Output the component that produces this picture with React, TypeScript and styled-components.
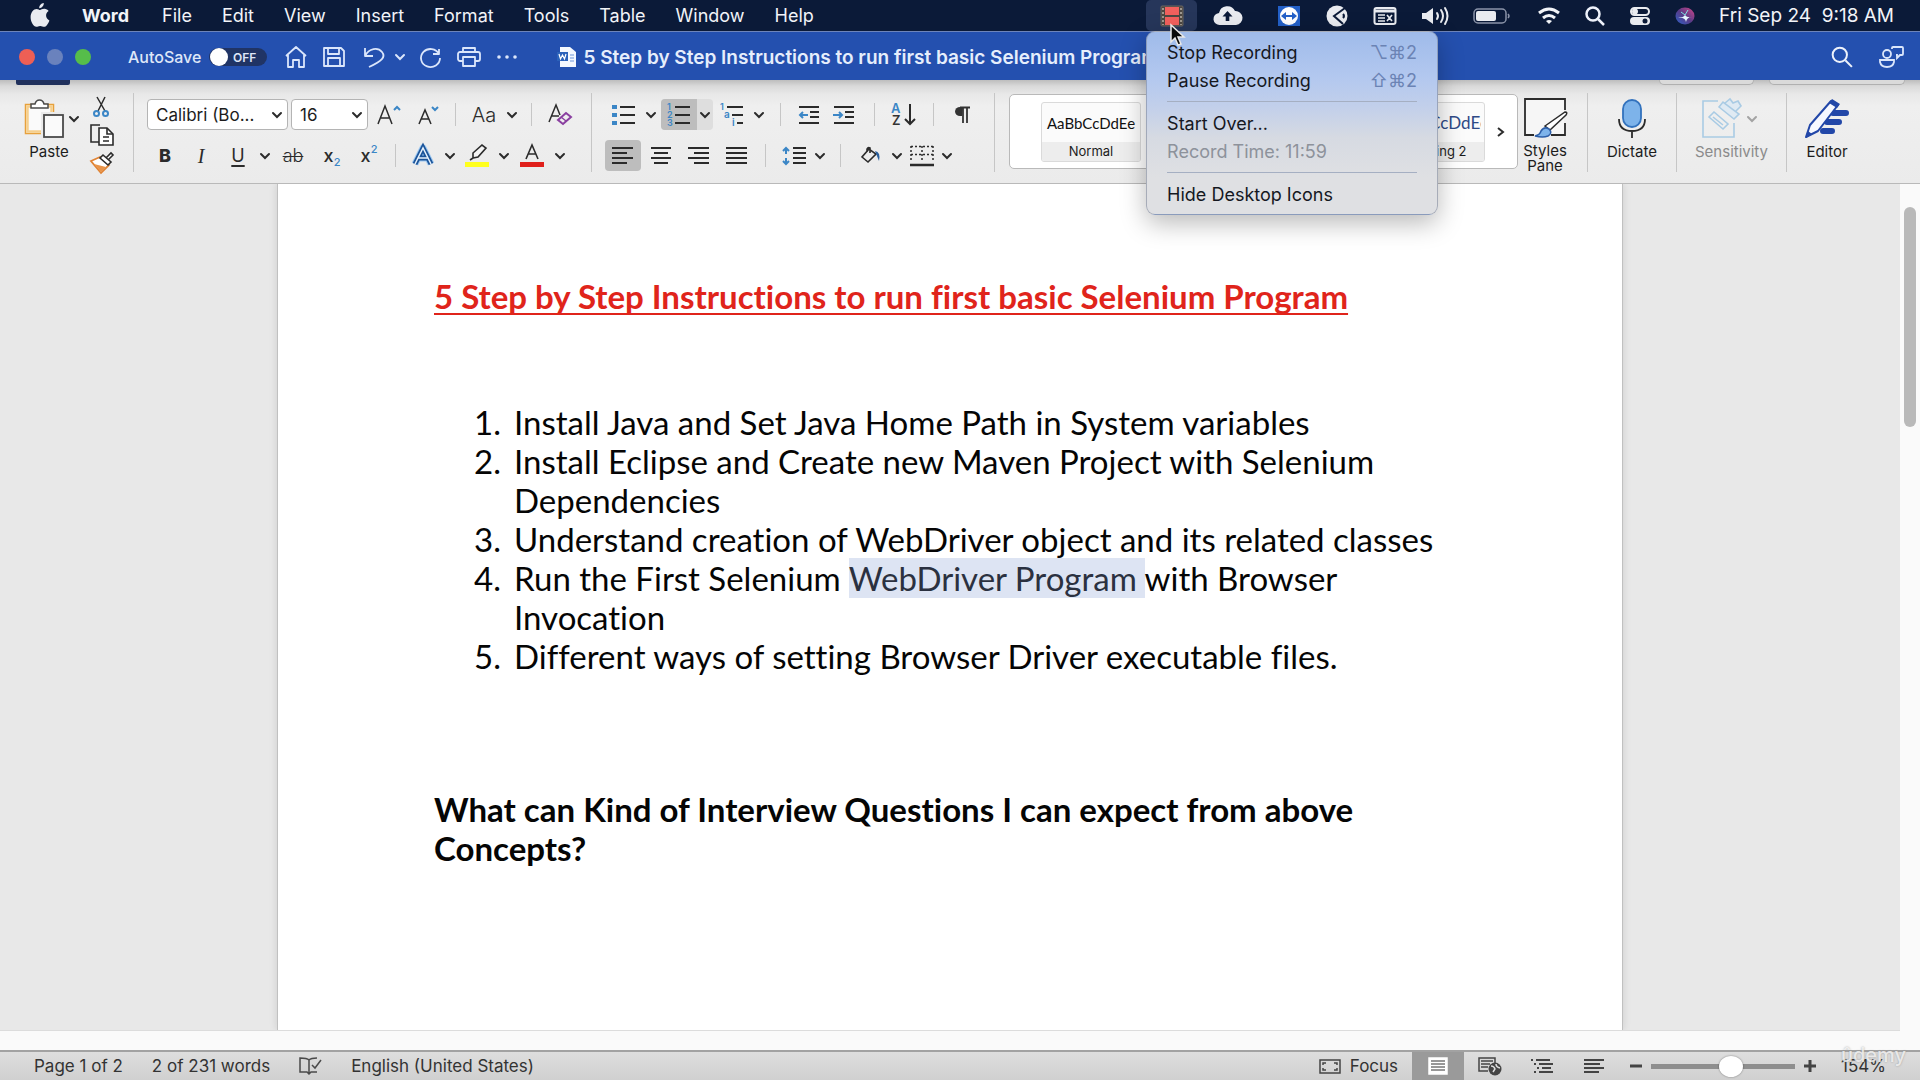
import React from "react";
import styled, { createGlobalStyle, css } from "styled-components";

const Global = createGlobalStyle`
  * { box-sizing: border-box; }
  html, body { margin: 0; padding: 0; }
  body { font-family: Inter, "Liberation Sans", sans-serif; color: #1c1c1c; }
  button, input, select { font: inherit; color: inherit; }
  button { border: 0; padding: 0; background: none; }
  svg { display: block; flex: none; overflow: visible; }
`;

const ui = { docFont: 'Lato, "Open Sans", sans-serif', line: "#c6c6c6", ink: "#2b2b2b", blue: "#3b86c6" };

const Shell = styled.div`
  display: flex;
  flex-direction: column;
  height: 100vh;
  overflow: hidden;
  background: #fafafa;
`;

/* ---------- macOS menu bar ---------- */
const MenuBar = styled.header`
  display: flex;
  align-items: center;
  justify-content: space-between;
  flex: none;
  height: 32px;
  padding: 0 26px 0 30px;
  background: #0b1a38;
  border-bottom: 1px solid #6d84ba;
  color: #f2f4f8;
  font-size: 18px;
  white-space: nowrap;
`;
const MenuNav = styled.nav`
  display: flex;
  align-items: center;
  gap: 30px;
`;
const MenuName = styled.button<{ $bold?: boolean }>`
  line-height: 30px;
  margin-right: ${(p) => (p.$bold ? 3 : 0)}px;
  font-weight: ${(p) => (p.$bold ? 700 : 400)};
`;
const AppleButton = styled.button`
  margin-right: 2px;
`;
const StatusIcons = styled.div`
  display: flex;
  align-items: center;
  gap: 24px;
`;
const Recorder = styled.div`
  position: relative;
  display: flex;
  margin-right: -8px;
`;
const RecorderButton = styled.button`
  display: flex;
  align-items: center;
  justify-content: center;
  width: 51px;
  height: 31px;
  border-radius: 5px;
  background: #26365a;
`;
const Pointer = styled.svg`
  position: absolute;
  left: 24px;
  top: 24px;
  z-index: 3;
`;
const Dropdown = styled.div`
  position: absolute;
  left: 0;
  top: 100%;
  z-index: 2;
  width: 292px;
  padding: 6px 0;
  border-radius: 9px;
  border: 1px solid rgba(120, 130, 150, 0.55);
  background: linear-gradient(#9fbbea 0, #b3c8ef 25%, #c3d0ea 42%, #d6dae2 58%, #dfe0e3 80%, #dfe0e3 100%);
  box-shadow: 0 8px 26px rgba(0, 0, 0, 0.28);
  color: #15181f;
`;
const DropItem = styled.button<{ $muted?: boolean }>`
  display: flex;
  align-items: center;
  justify-content: space-between;
  width: 100%;
  height: 28px;
  padding: 0 20px;
  color: ${(p) => (p.$muted ? "#8d929b" : "#15181f")};
`;
const Keys = styled.kbd`
  font-family: inherit;
  color: #6b83b4;
`;
const DropLine = styled.hr`
  height: 1px;
  margin: 7px 20px;
  border: 0;
  background: #a5afc2;
`;
const Clock = styled.time`
  font-size: 19px;
  white-space: pre;
`;

/* ---------- title bar ---------- */
const TitleBar = styled.div`
  display: flex;
  align-items: center;
  flex: none;
  height: 48px;
  padding: 2px 16px 0 19px;
  background: #2450af;
  color: #fff;
`;
const Lights = styled.div`
  display: flex;
  gap: 12px;
  margin-right: 37px;
`;
const Light = styled.button<{ $c: string }>`
  width: 16px;
  height: 16px;
  border-radius: 50%;
  background: ${(p) => p.$c};
`;
const AutoSave = styled.label`
  display: flex;
  align-items: center;
  gap: 8px;
  margin-right: 14px;
  color: #dfe7f8;
  font-size: 16px;
  font-weight: 500;
`;
const Switch = styled.span`
  position: relative;
  display: flex;
  align-items: center;
  justify-content: flex-end;
  width: 58px;
  height: 18px;
  padding-right: 11px;
  border-radius: 9px;
  background: #203465;
  font-size: 12px;
  font-weight: 600;
  input {
    position: absolute;
    left: 1px;
    top: 0;
    width: 18px;
    height: 18px;
    margin: 0;
    appearance: none;
    border-radius: 50%;
    background: #fff;
  }
`;
const QuickTools = styled.div`
  display: flex;
  align-items: center;
`;
const QuickButton = styled.button<{ $w: number }>`
  display: flex;
  justify-content: center;
  width: ${(p) => p.$w}px;
`;
const DocTitle = styled.h1`
  display: flex;
  flex: 1;
  align-items: center;
  gap: 7px;
  min-width: 0;
  margin: 0 0 0 30px;
  font-size: 19px;
  font-weight: 600;
  white-space: nowrap;
  color: #e6eefc;
`;
const TitleActions = styled.div`
  display: flex;
  gap: 26px;
`;

/* ---------- ribbon ---------- */
const Ribbon = styled.div`
  position: relative;
  display: flex;
  flex: none;
  height: 104px;
  padding: 13px 53px 11px 0;
  background: linear-gradient(#bdbdbd 0, #d9d9d9 6px, #e8e8e8 14px, #efefef 26px, #ebebeb 100%);
  border-bottom: 1px solid #b9b9b9;
`;
const TabMark = styled.span`
  position: absolute;
  left: 16px;
  top: 0;
  width: 54px;
  height: 5px;
  border-radius: 0 0 2px 2px;
  background: #20305c;
`;
const TabActions = styled.div`
  position: absolute;
  right: 15px;
  top: 0;
  display: flex;
  gap: 15px;
`;
const TabAction = styled.span<{ $w: number }>`
  width: ${(p) => p.$w}px;
  height: 5px;
  border: 1px solid #b0b0b0;
  border-top: 0;
  border-radius: 0 0 5px 5px;
  background: #dadada;
`;
const Group = styled.section<{ $l?: number; $r?: number; $last?: boolean }>`
  display: flex;
  flex: none;
  height: 79px;
  padding: 0 ${(p) => p.$r ?? 0}px 0 ${(p) => p.$l ?? 0}px;
  border-right: ${(p) => (p.$last ? 0 : 1)}px solid ${ui.line};
`;
const Rows = styled.div`
  display: flex;
  flex-direction: column;
  gap: 10px;
  padding-top: 6px;
`;
const Row = styled.div`
  display: flex;
  align-items: center;
  height: 31px;
`;
const Tool = styled.button<{ $w: number; $on?: boolean }>`
  display: flex;
  align-items: center;
  justify-content: center;
  width: ${(p) => p.$w}px;
  height: 31px;
  border-radius: 4px;
  background: ${(p) => (p.$on ? "#bdbdbd" : "none")};
  color: ${ui.ink};
`;
const Split = styled.span`
  display: flex;
  margin-left: 2px;
  border-radius: 4px;
  background: #dedede;
  button:first-child { border-radius: 4px 0 0 4px; }
`;
const Bar = styled.span<{ $m: number }>`
  width: 1px;
  height: 23px;
  margin: 0 ${(p) => p.$m}px;
  background: ${ui.line};
`;
const letter = css`
  display: block;
  line-height: 24px;
  font-size: 20px;
`;
const Bold = styled.b`${letter} font-weight: 800; font-size: 18px;`;
const Italic = styled.i`${letter} font-family: "Liberation Serif", serif;`;
const Under = styled.u`${letter} font-size: 18px; text-underline-offset: 3px; text-decoration-thickness: 2px;`;
const Strike = styled.s`${letter} font-size: 18px; font-weight: 300; text-decoration-thickness: 1px;`;
const Plain = styled.span`${letter} font-weight: 300;`;
const Script = styled.span<{ $up?: boolean }>`
  display: flex;
  align-items: center;
  height: 24px;
  font-size: 18px;
  font-weight: 500;
  small {
    align-self: ${(p) => (p.$up ? "flex-start" : "flex-end")};
    font-size: 11px;
    line-height: 11px;
    color: ${ui.blue};
  }
`;
const Combo = styled.span<{ $w: number }>`
  display: grid;
  align-items: center;
  width: ${(p) => p.$w}px;
  height: 31px;
  margin-right: ${(p) => (p.$w > 100 ? 3 : 1)}px;
  border: 1px solid #b4b4b4;
  border-radius: 4px;
  background: #fff;
  select {
    grid-area: 1 / 1;
    width: 100%;
    height: 29px;
    padding: 0 8px;
    border: 0;
    appearance: none;
    background: none;
    font-size: 17px;
  }
  svg {
    grid-area: 1 / 1;
    justify-self: end;
    margin-right: 5px;
    pointer-events: none;
  }
`;
const PasteColumn = styled.div`
  display: flex;
  flex-direction: column;
  width: 66px;
  padding-top: 6px;
`;
const PasteRow = styled.div`
  display: flex;
  align-items: center;
  height: 40px;
`;
const Label = styled.span<{ $muted?: boolean }>`
  font-size: 15px;
  line-height: 15px;
  text-align: center;
  color: ${(p) => (p.$muted ? "#8b8b8b" : "#1c1c1c")};
`;
const PasteLabel = styled(Label)`
  width: 50px;
  margin-top: 5px;
`;
const SmallColumn = styled.div`
  display: flex;
  flex-direction: column;
  gap: 6px;
  padding-top: 3px;
  button { display: block; height: 22px; }
`;
const GalleryGroup = styled(Group)`
  flex: 1;
  min-width: 0;
  border: 0;
`;
const Gallery = styled.div`
  display: flex;
  flex: 1;
  align-items: center;
  justify-content: space-between;
  height: 75px;
  margin-top: 1px;
  padding-left: 31px;
  border: 1px solid #b9b9b9;
  border-radius: 5px;
  background: #fff;
`;
const StyleCell = styled.button<{ $accent?: boolean }>`
  display: flex;
  flex-direction: column;
  width: 100px;
  height: 60px;
  overflow: hidden;
  border: 1px solid #dadada;
  border-radius: 3px;
  background: #fbfbfb;
  span {
    flex: 1;
    align-self: stretch;
    margin: 0 ${(p) => (p.$accent ? 3 : 0)}px;
    overflow: hidden;
    white-space: nowrap;
    font-family: ${ui.docFont};
    font-size: ${(p) => (p.$accent ? 17 : 15)}px;
    line-height: 40px;
    color: ${(p) => (p.$accent ? "#2f4a86" : "#111")};
  }
  em {
    align-self: stretch;
    background: #ededed;
    font-style: normal;
    font-size: 13px;
    line-height: 19px;
  }
`;
const GalleryEnd = styled.div`
  display: flex;
  align-items: center;
`;
const Big = styled.button<{ $w: number }>`
  display: flex;
  flex-direction: column;
  align-items: center;
  gap: 5px;
  width: ${(p) => p.$w}px;
  padding-top: 5px;
`;
const BigIcon = styled.span`
  display: flex;
  align-items: center;
  height: 41px;
`;

/* ---------- document ---------- */
const Workspace = styled.main`
  display: flex;
  flex: 1;
  min-height: 0;
`;
const Canvas = styled.div`
  display: flex;
  flex-direction: column;
  flex: 1;
  min-width: 0;
`;
const Desk = styled.div`
  display: flex;
  flex: 1;
  justify-content: center;
  min-height: 0;
  overflow: hidden;
  background: #e8e8e8;
  border-bottom: 1px solid #dcdcdc;
`;
const Paper = styled.article`
  width: 100%;
  max-width: 1346px;
  padding: 93px 156px;
  border: solid #c0c0c0;
  border-width: 0 1px;
  background: #fff;
  box-shadow: 0 0 8px rgba(0, 0, 0, 0.12);
  font-family: ${ui.docFont};
  font-size: 33px;
  line-height: 39px;
  font-variant-ligatures: no-common-ligatures;
  color: #050505;
`;
const Heading = styled.h2`
  margin: 0 0 87px;
  font-size: inherit;
  color: #e0241b;
  text-decoration: underline;
  text-decoration-thickness: 2px;
  text-underline-offset: 4px;
  text-decoration-skip-ink: none;
`;
const Steps = styled.ol`
  margin: 0 0 114px;
  padding: 0 0 0 40px;
  list-style: none;
  counter-reset: step;
`;
const Step = styled.li`
  display: flex;
  counter-increment: step;
  &::before {
    flex: none;
    width: 40px;
    content: counter(step) ".";
  }
`;
const Selected = styled.mark`
  background: #dde4f3;
  color: #2b3140;
`;
const Question = styled.h3`
  margin: 0;
  font-size: inherit;
`;
const HorizontalTrack = styled.div`
  height: 19px;
  background: #fafafa;
`;
const ScrollTrack = styled.div`
  width: 20px;
  padding: 23px 4px;
  background: #fafafa;
`;
const ScrollThumb = styled.div`
  width: 12px;
  height: 220px;
  border-radius: 6px;
  background: #b9b9b9;
`;

/* ---------- status bar ---------- */
const StatusBar = styled.footer`
  position: relative;
  display: flex;
  align-items: stretch;
  justify-content: space-between;
  flex: none;
  height: 30px;
  padding: 0 34px;
  border-top: 2px solid #a2a2a2;
  background: linear-gradient(#dedede, #d0d0d0);
  color: #333;
  font-size: 17px;
  white-space: nowrap;
`;
const StatusSide = styled.div<{ $gap?: number }>`
  display: flex;
  align-items: center;
  gap: ${(p) => p.$gap ?? 0}px;
`;
const Focus = styled.button`
  display: flex;
  align-items: center;
  gap: 9px;
  margin-right: 14px;
`;
const View = styled.button<{ $on?: boolean }>`
  display: flex;
  align-items: center;
  justify-content: center;
  width: 52px;
  height: 28px;
  background: ${(p) => (p.$on ? "#9a9a9a" : "none")};
`;
const ZoomBox = styled.div`
  display: flex;
  align-items: center;
  gap: 8px;
  margin: 0 24px 0 9px;
`;
const Slider = styled.input`
  width: 144px;
  height: 22px;
  margin: 0;
  appearance: none;
  background: linear-gradient(#8e8e8e, #8e8e8e) center / 100% 5px no-repeat;
  &::-webkit-slider-thumb {
    appearance: none;
    width: 24px;
    height: 21px;
    border-radius: 50%;
    background: #fff;
    box-shadow: 0 0 2px rgba(0, 0, 0, 0.45);
  }
`;
const Watermark = styled.span`
  position: absolute;
  right: 14px;
  top: -9px;
  font-size: 20px;
  line-height: 24px;
  font-weight: 500;
  color: rgba(250, 250, 250, 0.8);
  text-shadow: 0 0 2px rgba(110, 110, 110, 0.6);
`;

/* ---------- drawings ---------- */
const Svg = ({ w, h, children, s = ui.ink, sw = 2 }: { w: number; h: number; children: React.ReactNode; s?: string; sw?: number }) => (
  <svg width={w} height={h} viewBox={`0 0 ${w} ${h}`} fill="none" stroke={s} strokeWidth={sw} aria-hidden="true">
    {children}
  </svg>
);
const Chevron = ({ c = "#2b2b2b" }: { c?: string }) => (
  <Svg w={10} h={8} s={c} sw={2}><path d="M1 2l4 4 4-4" strokeLinecap="round" /></Svg>
);
const Drop = ({ label }: { label: string }) => (
  <Tool $w={16} aria-label={label}><Chevron /></Tool>
);
const Lines = ({ rows }: { rows: [number, number][] }) => (
  <Svg w={22} h={20} sw={2}>
    {rows.map(([a, b], i) => <path key={i} d={`M${a} ${2 + i * 5}H${b}`} />)}
  </Svg>
);
const Glyph = ({ x, y, size, c = ui.blue, w = 600, children }: { x: number; y: number; size: number; c?: string; w?: number; children: string }) => (
  <text x={x} y={y} fontSize={size} fontWeight={w} fill={c} stroke="none" fontFamily="Inter, sans-serif">{children}</text>
);

const Apple = () => (
  <svg width="20" height="25" viewBox="0 0 20 25" fill="#e9ebf0" aria-hidden="true">
    <path d="M13.8 0c.2 2.6-2 5.2-4.5 5.200C9 2.700 11.300.3 13.800 0zM10 7c1 0 2.300-1.300 4.400-1.200 1.800.1 3.300.9 4.200 2.300-3.800 2.300-3.100 7.800.8 9.300-.8 2.300-2.900 6.400-5.200 6.400-1.500 0-2.100-.9-4-.9s-2.500.9-3.900.9C3.700 23.800.6 18.900.6 14.300c0-5 3-8.400 6-8.400C8.300 5.900 9.300 7 10 7z" />
  </svg>
);
const Film = () => (
  <Svg w={24} h={22} sw={1}>
    <rect x="1" y="1" width="22" height="20" rx="1" fill="#4d4742" stroke="#6b6660" />
    <path d="M5 2h14v8H5zM5 12h14v8H5z" fill="#f2605d" stroke="none" />
    <path d="M3 3v17M21 3v17" stroke="#b9b2a8" strokeDasharray="2 2" strokeWidth="1.500" />
  </Svg>
);
const Cloud = () => (
  <Svg w={40} h={22}>
    <path d="M7 20a6 6 0 01-1-12A8.500 8.500 0 0122 6a7 7 0 011 14z" fill="#e9ebf0" stroke="none" />
    <path d="M14.500 6l-5 5.500h3.200V16h3.600v-4.500h3.200z" fill="#0b1a38" stroke="none" />
  </Svg>
);
const TeamViewer = () => (
  <Svg w={24} h={22}>
    <rect x="1" y="1" width="22" height="20" fill="#2360c8" stroke="none" />
    <circle cx="12" cy="11" r="9" fill="#fff" stroke="none" />
    <path d="M4 11l5-4v3h6V7l5 4-5 4v-3H9v3z" fill="#2360c8" stroke="none" />
  </Svg>
);
const Disc = () => (
  <Svg w={24} h={22}>
    <circle cx="12" cy="11" r="10.500" fill="#e9ebf0" stroke="none" />
    <path d="M20 3L9 11l9 8M18 9q2 2 0 4" stroke="#0b1a38" strokeWidth="2" />
  </Svg>
);
const Panel = () => (
  <Svg w={24} h={18} s="#e9ebf0">
    <rect x="1.500" y="1" width="21" height="16" rx="2" />
    <path d="M1 4h22" strokeWidth="3" />
    <path d="M5 8h7M5 11h7M5 14h7M14 8l5 6M19 8l-5 6" strokeWidth="1.600" />
  </Svg>
);
const Volume = () => (
  <Svg w={28} h={20} s="#e9ebf0">
    <path d="M1 7h4l7-5v16l-7-5H1z" fill="#e9ebf0" stroke="none" />
    <path d="M16 7q2 3 0 6M20 4q4 6 0 12M24 2q5 8 0 16" strokeLinecap="round" />
  </Svg>
);
const Battery = () => (
  <Svg w={40} h={18} s="#8a93a8" sw={1.5}>
    <rect x="1" y="2" width="32" height="14" rx="4" />
    <rect x="3" y="4" width="20" height="10" rx="2" fill="#e9ebf0" stroke="none" />
    <path d="M35 7q2 2 0 4" />
  </Svg>
);
const Wifi = () => (
  <Svg w={24} h={18} s="#f2f4f8" sw={3}>
    <path d="M2 6q10-8 20 0M6 11q6-5 12 0" />
    <path d="M12 17l-3-3q3-2 6 0z" fill="#f2f4f8" stroke="none" />
  </Svg>
);
const Search = ({ size = 20, sw = 2.500 }: { size?: number; sw?: number }) => (
  <svg width={size} height={size} viewBox="0 0 20 20" fill="none" stroke="#eef2fb" strokeWidth={sw} aria-hidden="true">
    <circle cx="8" cy="8" r="6.500" /><path d="M13 13l6 6" />
  </svg>
);
const Controls = () => (
  <Svg w={22} h={18} s="#e9ebf0">
    <rect x="2" y="1" width="18" height="7" rx="3.500" /><circle cx="6" cy="4.500" r="2" fill="#e9ebf0" />
    <rect x="1" y="10" width="20" height="8" rx="4" fill="#e9ebf0" stroke="none" /><circle cx="16" cy="14" r="2.500" fill="#0b1a38" stroke="none" />
  </Svg>
);
const Siri = () => (
  <Svg w={20} h={18}>
    <defs>
      <linearGradient id="siri" x1="0" y1="1" x2="1" y2="0">
        <stop offset="0" stopColor="#2c62c9" /><stop offset=".5" stopColor="#5a3a86" /><stop offset="1" stopColor="#d6478a" />
      </linearGradient>
    </defs>
    <ellipse cx="10" cy="9" rx="9.500" ry="8.500" fill="url(#siri)" stroke="none" />
    <path d="M3 11q5 0 7-3 2 3 7 2-5 0-6 5-1-5-8-4z" fill="#e6f6ff" stroke="none" />
    <path d="M10 8l3-5M10 8L6 5" stroke="#7fe0e4" strokeWidth="1" />
  </Svg>
);
const pale = "#dbe6fb";
const Home = () => <Svg w={22} h={22} s={pale} sw={1.8}><path d="M1 10L11 1l10 9M3 9v12h5v-7h6v7h5V9" strokeLinejoin="round" /></Svg>;
const Save = () => <Svg w={22} h={20} s={pale} sw={1.8}><path d="M1 1h17l3 3v15H1zM5 1v6h11V1M5 19v-8h12v8" strokeLinejoin="round" /></Svg>;
const Undo = () => <Svg w={20} h={21} s={pale} sw={1.8}><path d="M1 1v8h8M1 9C5 1 14 0 18 5s0 9-13 15" strokeLinejoin="round" /></Svg>;
const Redo = () => <Svg w={22} h={20} s={pale} sw={1.8}><path d="M20 2v5h-6M20 7A9.500 9 0 1021 11" strokeLinejoin="round" /></Svg>;
const Print = () => <Svg w={24} h={20} s={pale} sw={1.8}><path d="M6 5V1h12v4M6 14H3a2 2 0 01-2-2V7a2 2 0 012-2h18a2 2 0 012 2v5a2 2 0 01-2 2h-3M6 10h12v9H6z" strokeLinejoin="round" /></Svg>;
const Dots = () => <Svg w={20} h={4}><g fill={pale} stroke="none"><circle cx="2" cy="2" r="1.800" /><circle cx="10" cy="2" r="1.800" /><circle cx="18" cy="2" r="1.800" /></g></Svg>;
const WordFile = () => (
  <Svg w={19} h={20}>
    <path d="M3 0h10l6 5v15H3z" fill="#f4f8ff" stroke="none" />
    <rect x="0" y="5" width="11" height="9" fill="#2b62ba" stroke="none" />
    <path d="M2 7l1.500 5L5.500 8l2 4L9 7" stroke="#fff" strokeWidth="1.200" />
    <path d="M13 8h4M13 11h4M13 14h4" stroke="#6f96d8" strokeWidth="1" />
  </Svg>
);
const Share = () => (
  <Svg w={25} h={22} s={pale} sw={1.8}>
    <circle cx="8" cy="8" r="4" /><path d="M1 14h14v2q-1 5-7 5t-7-5z" />
    <path d="M13 3V2q0-1 1-1h9q1 0 1 1v6q0 1-1 1h-2l-3 3V9h-1" />
  </Svg>
);
const Clipboard = () => (
  <Svg w={40} h={40}>
    <rect x="1.500" y="5.500" width="28" height="29" fill="#fafafa" stroke="#e7a13c" strokeWidth="1.500" />
    <rect x="3.500" y="7.500" width="24" height="25" fill="#fafafa" stroke="#f6cf8c" strokeWidth="2.500" />
    <path d="M7 9V5h4q1-4 4.500-4T20 5h4v4z" fill="#fff" stroke="#4a4a4a" strokeWidth="1.500" />
    <rect x="19" y="15" width="20" height="24" fill="#f5f5f5" stroke="#ebebeb" strokeWidth="4" />
    <rect x="20" y="16" width="19" height="22" fill="#fafafa" stroke="#4a4a4a" strokeWidth="1.800" />
  </Svg>
);
const Scissors = () => (
  <Svg w={24} h={22} sw={1.5}>
    <path d="M7 1l8 14M15 1L8 15" /><circle cx="6.500" cy="17.500" r="2.500" stroke={ui.blue} strokeWidth="2" /><circle cx="15.500" cy="17.500" r="2.500" stroke={ui.blue} strokeWidth="2" />
  </Svg>
);
const Copy = () => (
  <Svg w={24} h={22} sw={1.6}>
    <path d="M9 18H1V1h9" /><path d="M9 4h8l6 6v11H9z" fill="#fff" /><path d="M17 4v6h6M13 13h6M13 17h6" />
  </Svg>
);
const Painter = () => (
  <Svg w={24} h={22} sw={1.6}>
    <path d="M1 9l9-4 9 8-8 8z" fill="#fff" stroke="#e08334" strokeWidth="1.800" />
    <path d="M4 12l12 3-5 5z" fill="#e8944a" stroke="none" />
    <path d="M10 6l3-3 8 7-3 3zM16 6l5-5 2 2-5 5" fill="#fff" />
  </Svg>
);
const FontSize = ({ up }: { up?: boolean }) => (
  <Svg w={24} h={22} sw={1.5}>
    <path d={up ? "M1 20L8 2l7 18M4 14h8" : "M3 20L9 6l6 14M5 15h8"} />
    <path d={up ? "M17 6l3-3 3 3" : "M16 3l3 3 3-3"} stroke={ui.blue} strokeWidth="2" />
  </Svg>
);
const ClearFormat = () => (
  <Svg w={24} h={22} sw={1.5}>
    <path d="M1 18L8 1l4 10M4 12h7" /><path d="M10 16l8-7 5 4-8 7z" stroke="#8a3fa0" strokeWidth="2" /><path d="M13 13l5 4" stroke="#8a3fa0" />
  </Svg>
);
const TextEffect = () => (
  <Svg w={24} h={24}>
    <path d="M4 20L12 4l8 16M7 14h10" stroke="#9cc8f2" strokeWidth="7" strokeLinejoin="round" />
    <path d="M4 20L12 4l8 16M7 14h10" stroke="#1c5499" strokeWidth="5" strokeLinejoin="miter" />
    <path d="M4 20L12 4l8 16M7 14h10" stroke="#e6f1fc" strokeWidth="1.500" />
  </Svg>
);
const Highlighter = () => (
  <Svg w={24} h={24} sw={1.6}>
    <path d="M8 14V9l9-8 4 3-8 9-5 1-3 2" fill="#f5f5f5" /><rect x="0" y="18" width="24" height="5" fill="#ffff1e" stroke="none" />
  </Svg>
);
const FontColor = () => (
  <Svg w={24} h={24} sw={1.6}>
    <path d="M6 15l6-14 6 14M8 10h8" /><rect x="0" y="18" width="24" height="5" fill="#e0201b" stroke="none" />
  </Svg>
);
const Bullets = () => (
  <Svg w={24} h={22}>
    <path d="M8 3h15M8 11h15M8 19h15" /><path d="M0 3h5M0 11h5M0 19h5" stroke={ui.blue} strokeWidth="4" />
  </Svg>
);
const Numbers = () => (
  <Svg w={24} h={24}>
    <path d="M8 4h15M8 12h15M8 20h15" />
    <Glyph x={0} y={7} size={9}>1</Glyph><Glyph x={0} y={15} size={9}>2</Glyph><Glyph x={0} y={23} size={9}>3</Glyph>
  </Svg>
);
const Multi = () => (
  <Svg w={24} h={24}>
    <path d="M7 4h16M12 12h11M17 20h6" />
    <Glyph x={0} y={7} size={9}>1</Glyph><Glyph x={4} y={15} size={10}>a</Glyph><Glyph x={12} y={23} size={10}>i</Glyph>
  </Svg>
);
const Indent = ({ out }: { out?: boolean }) => (
  <Svg w={22} h={20}>
    <path d="M1 2h20M12 7h9M12 12h9M1 18h20" />
    <path d={out ? "M10 10H2M5 7l-3 3 3 3" : "M0 10h9M6 7l3 3-3 3"} stroke={ui.blue} />
  </Svg>
);
const Sort = () => (
  <Svg w={26} h={24}>
    <Glyph x={0} y={10} size={13}>A</Glyph><Glyph x={1} y={22} size={13} c="#333">Z</Glyph>
    <path d="M19 1v20M14 16l5 5 5-5" />
  </Svg>
);
const Pilcrow = () => (
  <Svg w={16} h={18}>
    <path d="M9 1H6a5 4.500 0 000 9h2z" fill="#333" stroke="none" /><path d="M6 1.500h10M9 1v16M13 1v16" stroke="#333" strokeWidth="1.800" />
  </Svg>
);
const Spacing = () => (
  <Svg w={24} h={20}>
    <path d="M11 2h13M11 7h13M11 12h13M11 17h13" />
    <path d="M4 2v6M1 5l3-3 3 3M4 12v6M1 15l3 3 3-3" stroke={ui.blue} />
  </Svg>
);
const Bucket = () => (
  <Svg w={20} h={20} sw={1.6}>
    <path d="M8 3L1 11l6 5 8-8zM6 6V3q1-2 3-1v5" /><path d="M14 5q6 1 4 10l-2-5z" fill="#285f9e" stroke="none" />
  </Svg>
);
const Borders = () => (
  <Svg w={24} h={22} sw={1.500}>
    <path d="M1 1.500h22M1 1v16M23 1v16M1 9.500h22M12 1v16" strokeDasharray="2 2" /><path d="M0 20h24" strokeWidth="2.500" />
  </Svg>
);
const StylesPane = () => (
  <Svg w={44} h={40} sw={1.8}>
    <path d="M3 2h38v34H3z" fill="#f6f6f6" stroke="none" />
    <path d="M11 37H2V1h40v11M42 25v12H28" fill="none" />
    <path d="M22 28L42 14q3 0 1 3L27 32z" fill="#fff" strokeWidth="1.500" />
    <path d="M12 38q5-1 6-5 3-5 8-2 4 4-1 7-5 2-13 0z" fill="#7db3ea" stroke="#2c5ea8" strokeWidth="1.500" />
  </Svg>
);
const Mic = () => (
  <Svg w={30} h={40} sw={1.8}>
    <rect x="6" y="1" width="18" height="27" rx="9" fill="#7db3ea" stroke="#3272bd" /><path d="M2 20q0 12 13 12t13-12M15 32v7" />
  </Svg>
);
const Sensitivity = () => (
  <Svg w={40} h={40} s="#a9cbe4" sw={1.600}>
    <path d="M16 2H1v36h31V24" fill="none" />
    <path d="M7 18l5-5 14 12-5 5zM11 18l10 8" /><path d="M17 8l4-5 16 12-5 5zM23 4l5-4 3 4 5-2 3 5-5 5" fill="#dfeaf3" />
  </Svg>
);
const EditorIcon = () => (
  <Svg w={44} h={40} s="#2247a8" sw={6}>
    <path d="M28 14h13M22 23h12M18 32h9" strokeLinecap="round" />
    <path d="M1 38l4-12L26 2l7 4L13 32z" fill="#f6f8ff" strokeWidth="2" strokeLinejoin="round" />
    <path d="M24 4l3-4 8 5-3 4zM1 39l2-7 4 3z" fill="#2247a8" stroke="none" />
  </Svg>
);
const Proof = () => (
  <Svg w={23} h={18} s="#4a4a4a" sw={1.5}>
    <path d="M10 3q-2-2-9-2v14h7l2 2 2-2h6M10 3v14M10 3q2-2 8-2M13 8l3 3 6-8" />
  </Svg>
);
const FocusIcon = () => (
  <Svg w={22} h={15} s="#444" sw={1.5}>
    <rect x="1" y="1" width="20" height="13" /><path d="M4 6V4h3M15 4h3v2M4 9v2h3M15 11h3V9" />
  </Svg>
);
const PageView = () => (
  <Svg w={20} h={18} s="#fff" sw={1.500}><rect x="1" y="1" width="18" height="16" fill="#fff" /><path d="M3 4h14M3 7h14M3 10h14M3 13h14" stroke="#777" /></Svg>
);
const WebView = () => (
  <Svg w={24} h={19} s="#444" sw={1.500}>
    <path d="M10 14H1V1h16v6M3 4h12M3 7h9M3 10h7" /><circle cx="17" cy="12" r="6.500" fill="#444" stroke="none" /><path d="M13 9q3 0 4 3l-2 3M18 7q0 3 4 4" stroke="#ddd" />
  </Svg>
);
const OutlineView = () => (
  <Svg w={24} h={16} s="#444" sw={1.800}><path d="M1 2h2M6 2h14M4 6h2M9 6h14M7 10h2M12 10h9M4 14h2M9 14h14" /></Svg>
);
const DraftView = () => (
  <Svg w={22} h={16} s="#444" sw={1.800}><path d="M1 2h20M1 6h16M1 10h20M1 14h15" /></Svg>
);

const menus = ["File", "Edit", "View", "Insert", "Format", "Tools", "Table", "Window", "Help"];
const steps: React.ReactNode[] = [
  "Install Java and Set Java Home Path in System variables",
  "Install Eclipse and Create new Maven Project with Selenium Dependencies",
  "Understand creation of WebDriver object and its related classes",
  <>Run the First Selenium <Selected>WebDriver Program </Selected>with Browser Invocation</>,
  "Different ways of setting Browser Driver executable files.",
];

export default function App() {
  return (
    <Shell>
      <Global />
      <MenuBar>
        <MenuNav>
          <AppleButton aria-label="Apple menu"><Apple /></AppleButton>
          <MenuName $bold>Word</MenuName>
          {menus.map((m) => <MenuName key={m}>{m}</MenuName>)}
        </MenuNav>
        <StatusIcons>
          <Recorder>
            <RecorderButton aria-label="Screen recorder"><Film /></RecorderButton>
            <Dropdown>
              <DropItem>Stop Recording <Keys>⌥⌘2</Keys></DropItem>
              <DropItem>Pause Recording <Keys>⇧⌘2</Keys></DropItem>
              <DropLine />
              <DropItem>Start Over...</DropItem>
              <DropItem $muted>Record Time: 11:59</DropItem>
              <DropLine />
              <DropItem>Hide Desktop Icons</DropItem>
            </Dropdown>
            <Pointer width="16" height="22" viewBox="0 0 16 22">
              <path d="M1 1v17l4-4 3 7 3-1-3-7h6z" fill="#0a0a0a" stroke="#e8e8e8" strokeWidth="1.500" />
            </Pointer>
          </Recorder>
          <Cloud /><TeamViewer /><Disc /><Panel /><Volume /><Battery /><Wifi /><Search /><Controls /><Siri />
          <Clock>Fri Sep 24  9:18 AM</Clock>
        </StatusIcons>
      </MenuBar>

      <TitleBar>
        <Lights>
          <Light $c="#ee5f55" aria-label="Close" />
          <Light $c="#6a82bd" aria-label="Minimise" />
          <Light $c="#56bd4a" aria-label="Full screen" />
        </Lights>
        <AutoSave>AutoSave<Switch><input type="checkbox" />OFF</Switch></AutoSave>
        <QuickTools>
          <QuickButton $w={30} aria-label="Home"><Home /></QuickButton>
          <QuickButton $w={46} aria-label="Save"><Save /></QuickButton>
          <QuickButton $w={34} aria-label="Undo"><Undo /></QuickButton>
          <QuickButton $w={18} aria-label="Undo list"><Chevron c={pale} /></QuickButton>
          <QuickButton $w={42} aria-label="Redo"><Redo /></QuickButton>
          <QuickButton $w={36} aria-label="Print"><Print /></QuickButton>
          <QuickButton $w={40} aria-label="More"><Dots /></QuickButton>
        </QuickTools>
        <DocTitle><WordFile />5 Step by Step Instructions to run first basic Selenium Program</DocTitle>
        <TitleActions>
          <button aria-label="Search"><Search size={22} sw={1.8} /></button>
          <button aria-label="Share"><Share /></button>
        </TitleActions>
      </TitleBar>

      <Ribbon>
        <TabMark />
        <TabActions><TabAction $w={95} /><TabAction $w={136} /></TabActions>

        <Group $l={24} $r={19}>
          <PasteColumn>
            <PasteRow>
              <button aria-label="Paste"><Clipboard /></button>
              <Tool $w={20} aria-label="Paste options"><Chevron /></Tool>
            </PasteRow>
            <PasteLabel>Paste</PasteLabel>
          </PasteColumn>
          <SmallColumn>
            <button aria-label="Cut"><Scissors /></button>
            <button aria-label="Copy"><Copy /></button>
            <button aria-label="Format painter"><Painter /></button>
          </SmallColumn>
        </Group>

        <Group $l={13} $r={14}>
          <Rows>
            <Row>
              <Combo $w={141}><select aria-label="Font"><option>Calibri (Bo...</option></select><Chevron /></Combo>
              <Combo $w={77}><select aria-label="Font size"><option>16</option></select><Chevron /></Combo>
              <Tool $w={40} aria-label="Grow font"><FontSize up /></Tool>
              <Tool $w={38} aria-label="Shrink font"><FontSize /></Tool>
              <Bar $m={8} />
              <Tool $w={40}><Plain>Aa</Plain></Tool><Drop label="Case options" />
              <Bar $m={11} />
              <Tool $w={34} aria-label="Clear formatting"><ClearFormat /></Tool>
            </Row>
            <Row>
              <Tool $w={36}><Bold>B</Bold></Tool>
              <Tool $w={36}><Italic>I</Italic></Tool>
              <Tool $w={38}><Under>U</Under></Tool><Drop label="Underline options" />
              <Tool $w={40}><Strike>ab</Strike></Tool>
              <Tool $w={38}><Script>x<small>2</small></Script></Tool>
              <Tool $w={36}><Script $up>x<small>2</small></Script></Tool>
              <Bar $m={8} />
              <Tool $w={38} aria-label="Text effects"><TextEffect /></Tool><Drop label="Effect options" />
              <Tool $w={38} aria-label="Highlight"><Highlighter /></Tool><Drop label="Highlight options" />
              <Tool $w={40} aria-label="Font colour"><FontColor /></Tool><Drop label="Colour options" />
            </Row>
          </Rows>
        </Group>

        <Group $l={13} $r={14}>
          <Rows>
            <Row>
              <Tool $w={38} aria-label="Bullets"><Bullets /></Tool><Drop label="Bullet options" />
              <Split><Tool $w={36} $on aria-label="Numbering"><Numbers /></Tool><Drop label="Numbering options" /></Split>
              <Tool $w={38} aria-label="Multilevel list"><Multi /></Tool><Drop label="List options" />
              <Bar $m={13} />
              <Tool $w={30} aria-label="Decrease indent"><Indent out /></Tool>
              <Tool $w={40} aria-label="Increase indent"><Indent /></Tool>
              <Bar $m={10} />
              <Tool $w={38} aria-label="Sort"><Sort /></Tool>
              <Bar $m={10} />
              <Tool $w={36} aria-label="Show marks"><Pilcrow /></Tool>
            </Row>
            <Row>
              <Tool $w={36} $on aria-label="Align left"><Lines rows={[[0, 21], [0, 15], [0, 21], [0, 15]]} /></Tool>
              <Tool $w={40} aria-label="Centre"><Lines rows={[[1, 21], [4, 18], [1, 21], [4, 18]]} /></Tool>
              <Tool $w={36} aria-label="Align right"><Lines rows={[[0, 21], [6, 21], [0, 21], [6, 21]]} /></Tool>
              <Tool $w={38} aria-label="Justify"><Lines rows={[[1, 22], [1, 22], [1, 22], [1, 22]]} /></Tool>
              <Bar $m={10} />
              <Tool $w={36} aria-label="Line spacing"><Spacing /></Tool><Drop label="Spacing options" />
              <Bar $m={12} />
              <Tool $w={36} aria-label="Shading"><Bucket /></Tool><Drop label="Shading options" />
              <Tool $w={34} aria-label="Borders"><Borders /></Tool><Drop label="Border options" />
            </Row>
          </Rows>
        </Group>

        <GalleryGroup $l={14}>
          <Gallery>
            <StyleCell><span>AaBbCcDdEe</span><em>Normal</em></StyleCell>
            <GalleryEnd>
              <StyleCell $accent><span>AaBbCcDdEe</span><em>Heading 2</em></StyleCell>
              <Tool $w={32} aria-label="More styles"><Svg w={8} h={10}><path d="M1 1l5 4-5 4" /></Svg></Tool>
            </GalleryEnd>
          </Gallery>
        </GalleryGroup>
        <Group $r={15}>
          <Big $w={54}><BigIcon><StylesPane /></BigIcon><Label>Styles Pane</Label></Big>
        </Group>
        <Group><Big $w={88}><BigIcon><Mic /></BigIcon><Label>Dictate</Label></Big></Group>
        <Group>
          <Big $w={109}><BigIcon><Sensitivity /><Tool $w={20} as="span"><Chevron c="#a3a3a3" /></Tool></BigIcon><Label $muted>Sensitivity</Label></Big>
        </Group>
        <Group $last><Big $w={80}><BigIcon><EditorIcon /></BigIcon><Label>Editor</Label></Big></Group>
      </Ribbon>

      <Workspace>
        <Canvas>
          <Desk>
            <Paper>
              <Heading>5 Step by Step Instructions to run first basic Selenium Program</Heading>
              <Steps>{steps.map((s, i) => <Step key={i}><span>{s}</span></Step>)}</Steps>
              <Question>What can Kind of Interview Questions I can expect from above Concepts?</Question>
            </Paper>
          </Desk>
          <HorizontalTrack />
        </Canvas>
        <ScrollTrack><ScrollThumb /></ScrollTrack>
      </Workspace>

      <StatusBar>
        <StatusSide $gap={29}>
          <span>Page 1 of 2</span>
          <span>2 of 231 words</span>
          <button aria-label="Proofing"><Proof /></button>
          <span>English (United States)</span>
        </StatusSide>
        <StatusSide>
          <Focus><FocusIcon />Focus</Focus>
          <View $on aria-label="Print layout"><PageView /></View>
          <View aria-label="Web layout"><WebView /></View>
          <View aria-label="Outline"><OutlineView /></View>
          <View aria-label="Draft"><DraftView /></View>
          <ZoomBox>
            <button aria-label="Zoom out"><Svg w={14} h={14} s="#444" sw={3}><path d="M1 7h12" /></Svg></button>
            <Slider type="range" min="0" max="100" defaultValue="57" aria-label="Zoom" />
            <button aria-label="Zoom in"><Svg w={14} h={14} s="#444" sw={3}><path d="M1 7h12M7 1v12" /></Svg></button>
          </ZoomBox>
          <span>154%</span>
        </StatusSide>
        <Watermark>ûdemy</Watermark>
      </StatusBar>
    </Shell>
  );
}
